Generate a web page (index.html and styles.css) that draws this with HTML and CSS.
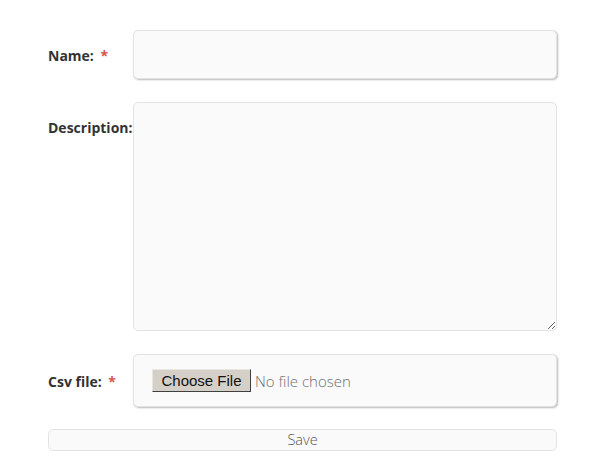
FILE: index.html
```html
<!DOCTYPE html>
<html>
<head>
<meta charset="utf-8">
<link rel="stylesheet" href="styles.css">
</head>
<body>
<form class="form">
  <div class="row row-center">
    <label class="label">Name: <span class="req">*</span></label>
    <input class="field field-input" type="text">
  </div>
  <div class="row row-top">
    <label class="label label-top">Description:</label>
    <textarea class="field field-area"></textarea>
  </div>
  <div class="row row-center">
    <label class="label">Csv file: <span class="req">*</span></label>
    <div class="field field-file">
      <span class="file-btn">Choose File</span>
      <span class="file-text">No file chosen</span>
    </div>
  </div>
  <button class="save" type="button">Save</button>
</form>
</body>
</html>
```

FILE: styles.css
```css
html, body {
  margin: 0;
  padding: 0;
  background: #ffffff;
}

body {
  font-family: "Open Sans", "Liberation Sans", sans-serif;
}

.form {
  width: 509px;
  padding: 30px 0 0 48px;
  display: flex;
  flex-direction: column;
}

.row {
  display: flex;
  margin-bottom: 23px;
}

.row-center {
  align-items: center;
}

.row-top {
  align-items: flex-start;
}

.label {
  width: 85px;
  flex: 0 0 85px;
  font-size: 14px;
  line-height: 20px;
  font-weight: 700;
  color: #333333;
  white-space: nowrap;
  box-sizing: border-box;
  padding-top: 2px;
}

.label-top {
  padding-top: 16px;
}

.req {
  color: #d9534f;
  margin-left: 3px;
}

.field {
  box-sizing: border-box;
  width: 424px;
  background: #fafafa;
  border: 1px solid #e3e3e3;
  border-radius: 5px;
  margin: 0;
  font-family: "Open Sans", sans-serif;
}

.field-input {
  height: 49px;
  box-shadow: 1px 1px 2px rgba(0, 0, 0, 0.28);
  outline: none;
}

.field-area {
  height: 229px;
  resize: vertical;
  display: block;
  outline: none;
}

.field-file {
  height: 53px;
  box-shadow: 1px 1px 2px rgba(0, 0, 0, 0.28);
  display: flex;
  align-items: center;
  padding-left: 18px;
}

.file-btn {
  box-sizing: border-box;
  height: 23px;
  width: 99px;
  background: #d4d0c8;
  border-top: 1px solid #e8e6e1;
  border-left: 1px solid #e8e6e1;
  border-right: 1px solid #404040;
  border-bottom: 1px solid #404040;
  font-family: "Liberation Sans", Arial, sans-serif;
  font-size: 15px;
  line-height: 21px;
  color: #111111;
  text-align: center;
}

.file-text {
  margin-left: 4px;
  font-size: 15px;
  font-weight: 300;
  color: #6f6f6f;
}

.save {
  box-sizing: border-box;
  width: 509px;
  height: 22px;
  margin: -1px 0 0 0;
  padding: 0;
  background: #fafafa;
  border: 1px solid #e3e3e3;
  border-radius: 5px;
  font-family: "Open Sans", sans-serif;
  font-size: 14.5px;
  font-weight: 300;
  line-height: 20px;
  color: #555555;
  text-align: center;
}
```
